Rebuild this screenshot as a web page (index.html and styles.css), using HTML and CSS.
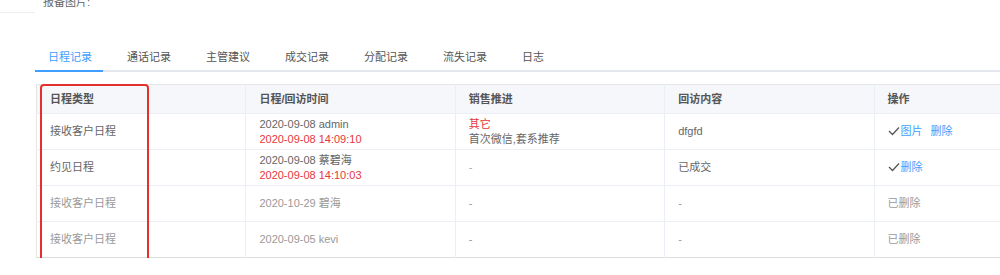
FILE: index.html
```html
<!DOCTYPE html>
<html lang="zh-CN">
<head>
  <meta charset="UTF-8">
  <title>日程记录</title>
  <link rel="stylesheet" href="styles.css">
</head>
<body>

  <div class="report-row">
    <span class="rule"></span>
    <span class="report-label">报备图片:</span>
  </div>

  <div class="tabs">
    <div class="tab active">日程记录</div>
    <div class="tab">通话记录</div>
    <div class="tab">主管建议</div>
    <div class="tab">成交记录</div>
    <div class="tab">分配记录</div>
    <div class="tab">流失记录</div>
    <div class="tab">日志</div>
  </div>

  <div class="table-wrap">
    <table class="records">
      <thead>
        <tr>
          <th>日程类型</th>
          <th>日程/回访时间</th>
          <th>销售推进</th>
          <th>回访内容</th>
          <th>操作</th>
        </tr>
      </thead>
      <tbody>
        <tr>
          <td>接收客户日程</td>
          <td>2020-09-08 admin<br><span class="red">2020-09-08 14:09:10</span></td>
          <td><span class="red">其它</span><br>首次微信,套系推荐</td>
          <td>dfgfd</td>
          <td class="ops">
            <svg class="check" width="12" height="10" viewBox="0 0 12 10"><polyline points="1,5 4.5,8.5 11,1.5" fill="none" stroke="#555" stroke-width="1.3"/></svg><a class="link">图片</a><a class="link gap">删除</a>
          </td>
        </tr>
        <tr>
          <td>约见日程</td>
          <td>2020-09-08 蔡碧海<br><span class="red">2020-09-08 14:10:03</span></td>
          <td class="muted">-</td>
          <td>已成交</td>
          <td class="ops">
            <svg class="check" width="12" height="10" viewBox="0 0 12 10"><polyline points="1,5 4.5,8.5 11,1.5" fill="none" stroke="#555" stroke-width="1.3"/></svg><a class="link">删除</a>
          </td>
        </tr>
        <tr class="deleted">
          <td>接收客户日程</td>
          <td>2020-10-29 碧海</td>
          <td>-</td>
          <td>-</td>
          <td>已删除</td>
        </tr>
        <tr class="deleted">
          <td>接收客户日程</td>
          <td>2020-09-05 kevi</td>
          <td>-</td>
          <td>-</td>
          <td>已删除</td>
        </tr>
      </tbody>
    </table>
    <div class="mark"></div>
  </div>

</body>
</html>
```

FILE: styles.css
```css
html, body {
  overflow: hidden;
}
body {
  margin: 0;
  font-family: "Liberation Sans", "Noto Sans CJK SC", sans-serif;
  font-size: 11px;
  color: #666;
  background: #fff;
}
.report-row {
  display: flex;
  align-items: flex-end;
  height: 16px;
  margin-top: -3px;
}
.rule {
  width: 35px;
  border-bottom: 1px solid #eee;
}
.report-label {
  margin-left: 8px;
  margin-bottom: 4px;
  color: #666;
  font-size: 11px;
}
.tabs {
  display: flex;
  margin: 31px 0 0 35px;
  border-bottom: 2px solid #e4e7ed;
}
.tab {
  line-height: 26px;
  padding: 0 11px 0 13px;
  margin-right: 11px;
  margin-bottom: -2px;
  border-bottom: 2px solid transparent;
  color: #555;
  font-size: 11px;
}
.tab.active {
  color: #409eff;
  border-bottom-color: #409eff;
}
.table-wrap {
  position: relative;
  margin: 12px 0 0 36px;
}
.records {
  width: 1048px;
  table-layout: fixed;
  border-collapse: collapse;
  border-left: 1px solid #e6e6e6;
  border-bottom: 1px solid #dcdcdc;
}
.records th, .records td {
  text-align: left;
  padding: 0 13px;
  border-top: 1px solid #ebeef5;
  border-right: 1px solid #ebeef5;
  line-height: 15px;
  vertical-align: middle;
}
.records th {
  height: 28px;
  background: #f5f7fa;
  color: #555;
  font-weight: bold;
  border-top-color: #e6e6e6;
}
.records td {
  height: 35px;
}
.red {
  color: #e8353a;
}
.muted {
  color: #aaa;
}
.deleted td {
  color: #9a9a9a;
}
.ops {
  color: #555;
}
.check {
  vertical-align: -1px;
  margin-right: 1px;
}
.link {
  color: #409eff;
}
.link.gap {
  margin-left: 8px;
}
.mark {
  position: absolute;
  left: 4px;
  top: 0;
  width: 105px;
  height: 176px;
  border: 2px solid #e5302b;
  border-radius: 4px;
}
```
